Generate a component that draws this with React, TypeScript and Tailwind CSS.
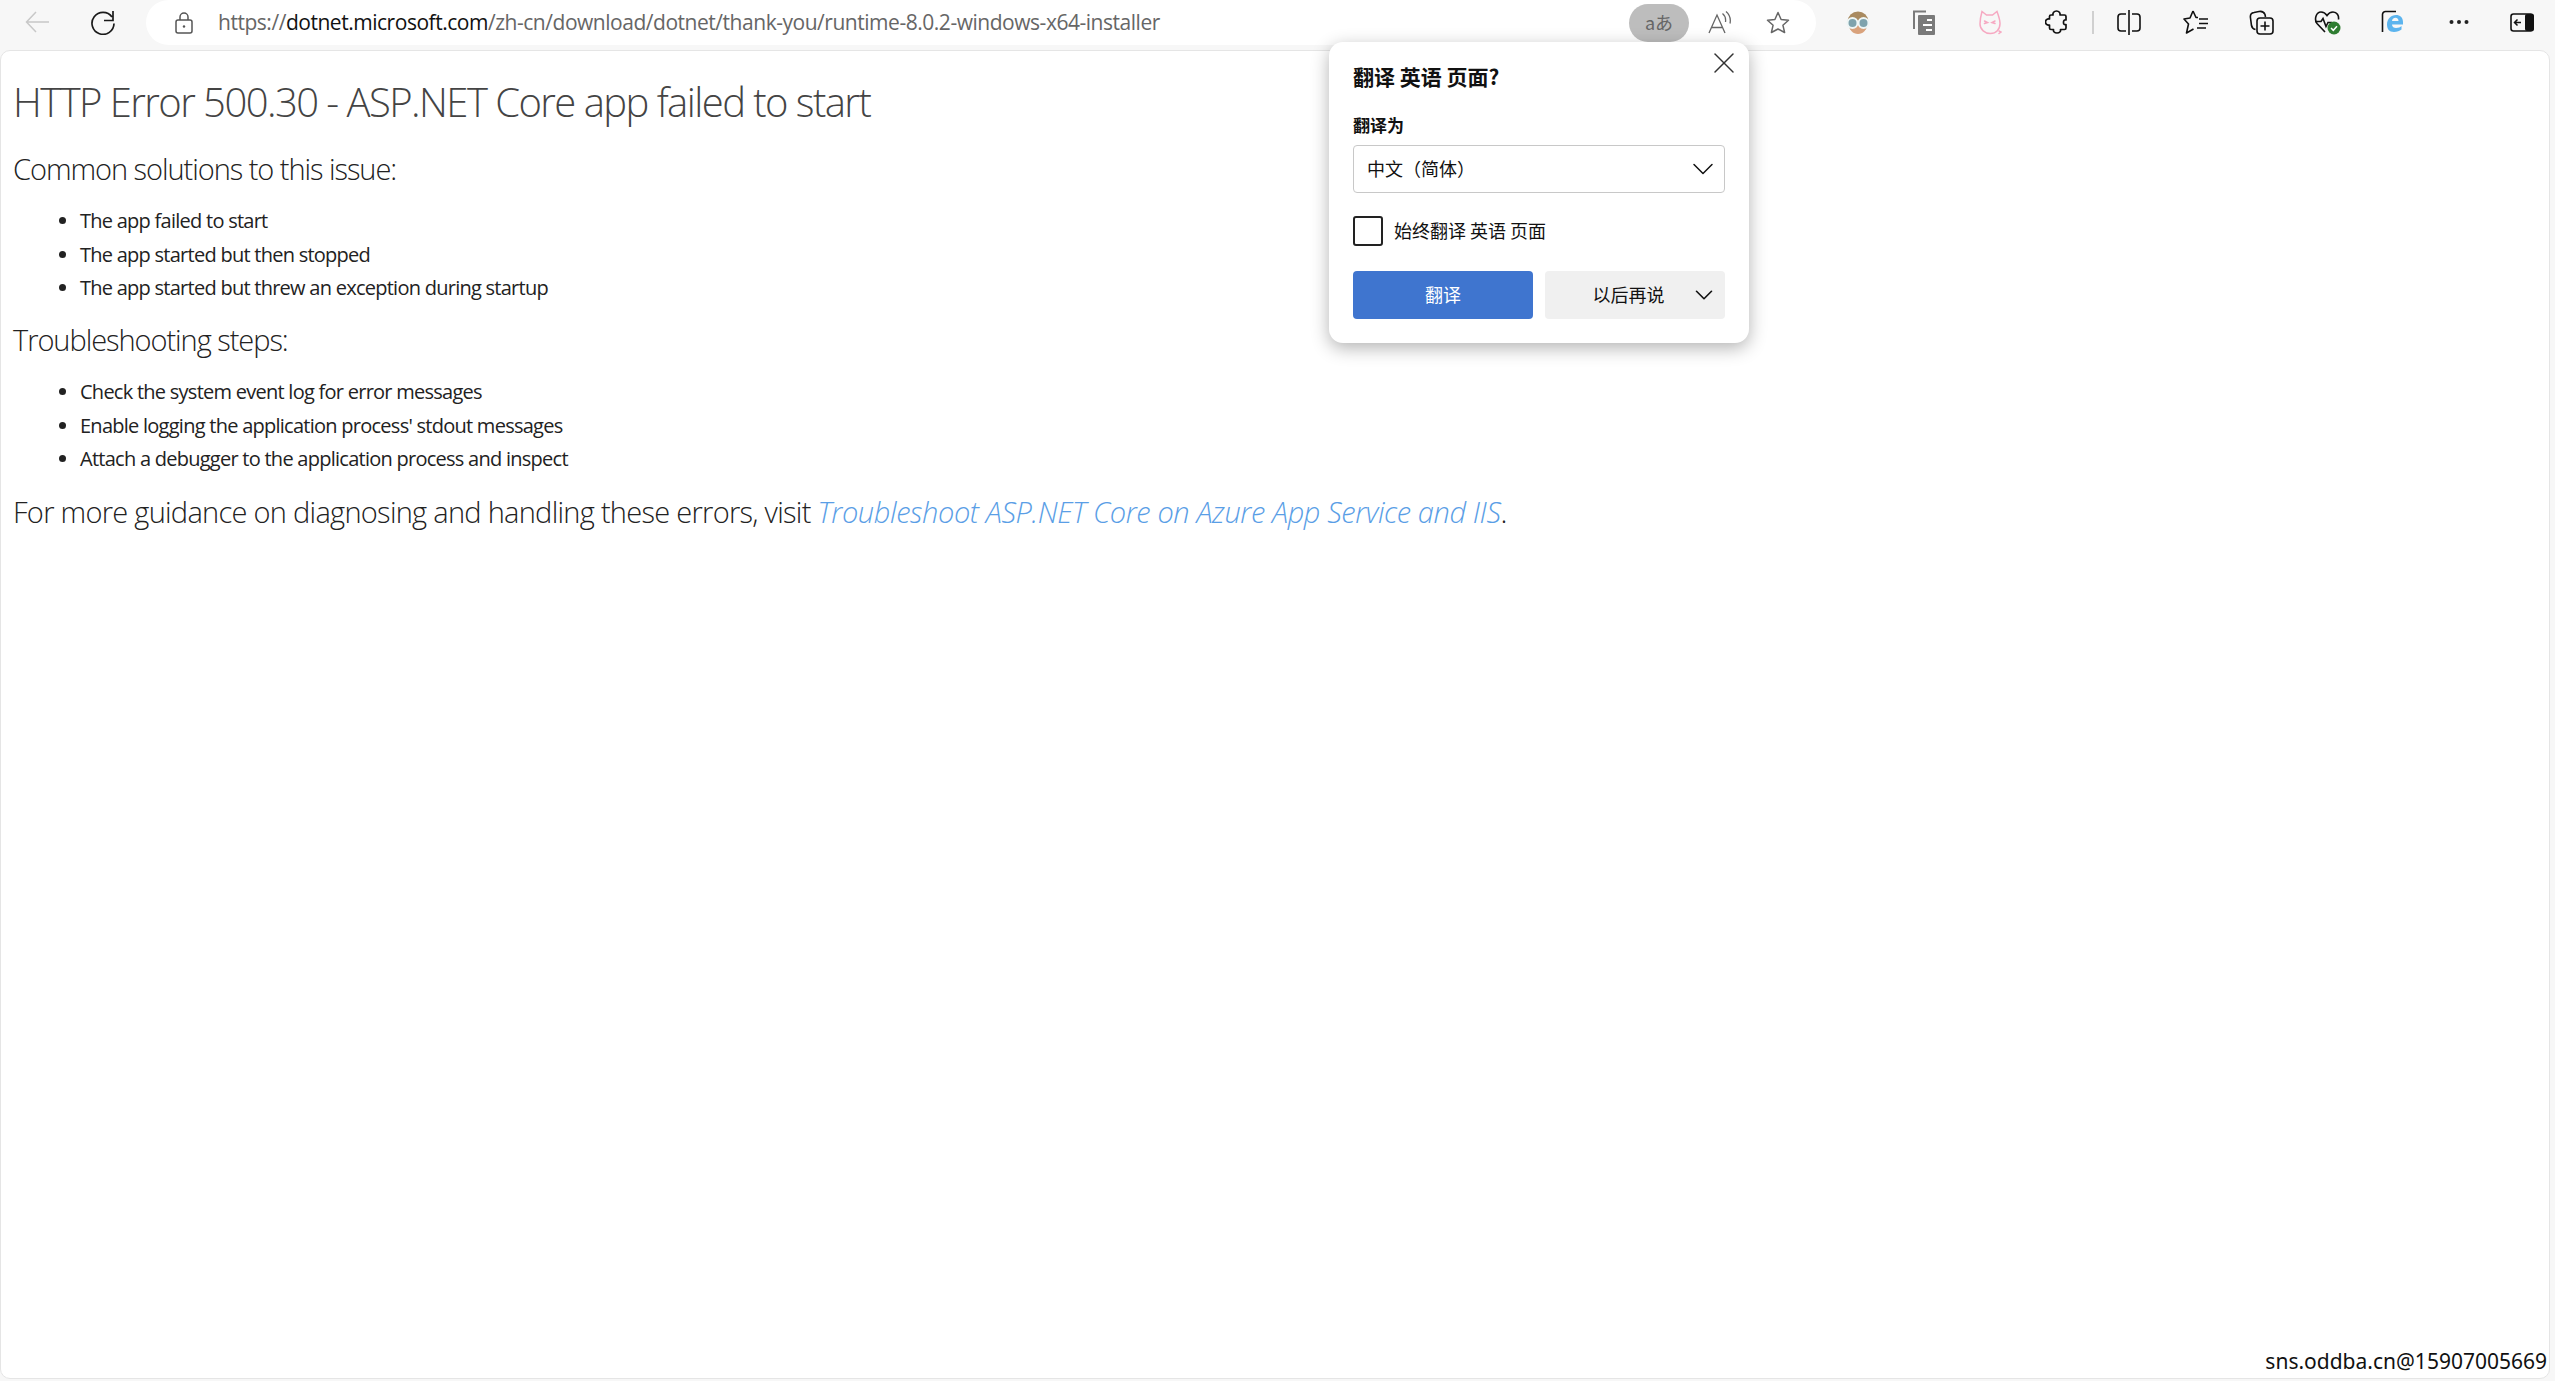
import { X, ChevronDown } from 'lucide-react'

const SANS = "font-['Open_Sans','Noto_Sans_CJK_SC',sans-serif]"
const CJK = "font-['Noto_Sans_CJK_SC','Noto_Sans',sans-serif]"

const COMMON = ['The app failed to start', 'The app started but then stopped', 'The app started but threw an exception during startup']
const STEPS = ['Check the system event log for error messages', "Enable logging the application process' stdout messages", 'Attach a debugger to the application process and inspect']

function Bullets({ items }: { items: string[] }) {
  return (
    <ul className="mt-[15px] ml-[46px] text-[20px] leading-[33.5px] font-normal tracking-[-0.74px] text-[#222]">
      {items.map(t => (
        <li key={t} className="flex items-center gap-[14px]">
          <span className="h-[7px] w-[7px] rounded-full bg-[#222]" />
          {t}
        </li>
      ))}
    </ul>
  )
}

function ToolbarSlot({ children }: { children: React.ReactNode }) {
  return <div className="flex h-[44px] w-[66px] shrink-0 items-center justify-center">{children}</div>
}

export default function App() {
  return (
    <div className={`relative flex h-[1381px] w-[2555px] flex-col overflow-hidden bg-[#f7f7f7] ${SANS}`}>
      {/* toolbar */}
      <header className="flex h-[50px] shrink-0 items-start">
        <div className="flex h-[44px] w-[74px] shrink-0 items-center justify-center">
          <svg width="24" height="22" viewBox="0 0 24 22" fill="none" stroke="#c8c8c8" strokeWidth="1.5"><path d="M24 11H1.500M11 1 1.500 11 11 21" /></svg>
        </div>
        <div className="flex h-[44px] w-[58px] shrink-0 items-center justify-center">
          <svg width="24" height="25" viewBox="0 0 24 25" fill="none" stroke="#1a1a1a" strokeWidth="1.700"><path d="M21 7A11 11 0 1 0 23 13.500M22 1v9.500h-9" /></svg>
        </div>
        <div className="ml-[14px] flex h-[45px] w-[1670px] shrink-0 items-center rounded-[24px] bg-white pr-[9px] pl-[29px]">
          <svg width="18" height="22" viewBox="0 0 18 22" fill="none" stroke="#555" strokeWidth="1.500"><rect x="1" y="8" width="16" height="13" rx="2" /><path d="M5 8V5a4 4 0 0 1 8 0v3" /><circle cx="9" cy="14.500" r="1.200" fill="#555" stroke="none" /></svg>
          <span className="ml-[25px] text-[21px] tracking-[-0.47px] text-[#666]">https://<span className="text-[#111]">dotnet.microsoft.com</span>/zh-cn/download/dotnet/thank-you/runtime-8.0.2-windows-x64-installer</span>
          <div className="ml-auto flex items-center">
            <div className={`flex h-[38px] w-[60px] items-center justify-center rounded-full bg-[#bdbdbd] text-[18px] text-[#666] ${CJK}`}>aあ</div>
            <div className="flex w-[60px] justify-center">
              <svg width="23" height="23" viewBox="0 0 23 23" fill="none" stroke="#666" strokeWidth="1.300"><path d="M1 22 9 4l8 18M3.500 16.500h11M14.500 2.500c2.500 2 3.500 5 3 8.500M18 .5c3.500 3 5 7 4 12" /></svg>
            </div>
            <div className="flex w-[58px] justify-center">
              <svg width="24" height="24" viewBox="0 0 24 24" fill="none" stroke="#666" strokeWidth="1.500" strokeLinejoin="round"><path d="m12 1.500 3.100 7 7.400.7-5.600 5 1.700 7.300L12 18l-6.600 3.500 1.700-7.300-5.600-5 7.400-.7z" /></svg>
            </div>
          </div>
        </div>
        <div className="flex flex-1 items-center pl-[9px]">
          <ToolbarSlot>
            <svg width="24" height="23" viewBox="0 0 24 23"><circle cx="12" cy="11" r="10.500" fill="#a98a60" /><path d="M3 13h18c0 6-4 10-9 10s-9-4-9-10z" fill="#d9a27c" /><circle cx="6.500" cy="12" r="5" fill="#7fa3ad" stroke="#eef6f6" strokeWidth="2" /><circle cx="17.500" cy="12" r="5" fill="#7fa3ad" stroke="#eef6f6" strokeWidth="2" /></svg>
          </ToolbarSlot>
          <ToolbarSlot>
            <svg width="22" height="25" viewBox="0 0 22 25" fill="none"><path d="M1 19V1.500h12" stroke="#7a7a7a" strokeWidth="2" /><rect x="5" y="5" width="17" height="20" rx="1" fill="#7a7a7a" /><path d="M14 10h5M10 15h9M13 20h6" stroke="#fff" strokeWidth="2" /></svg>
          </ToolbarSlot>
          <ToolbarSlot>
            <svg width="23" height="25" viewBox="0 0 23 25" fill="none" stroke="#f6a9c2" strokeWidth="1.500" strokeLinecap="round"><path d="M3 1.500 7.500 5h6L18 1.500c1.500 4 3 8 3 12 0 6-4 10-9.500 10S1 19.500 1 14C1 10 2 5 3 1.500z" /><path d="m5.500 11 3 1.500-3 1M16 11l-3 1.500 3 1M20 21l2 1-2 1.500" /></svg>
          </ToolbarSlot>
          <ToolbarSlot>
            <svg width="23" height="25" viewBox="0 0 23 25" fill="none" stroke="#111" strokeWidth="1.700" strokeLinejoin="round"><path d="M8 5c-.5-2 1-4 3.500-4S15.500 3 15 5h4.500A1.500 1.500 0 0 1 21 6.500V10c-2-.5-2.500 1-2.500 2.500S19 15 21 14.500V18a1.500 1.500 0 0 1-1.500 1.500h-4c.5 2-1 3.500-3.500 3.500s-4-1.500-3.500-3.500H6A1.500 1.500 0 0 1 4.500 18v-3c-2.500.5-4-1-4-3s1.500-3.500 4-3V6.500A1.500 1.500 0 0 1 6 5z" /></svg>
          </ToolbarSlot>
          <div className="ml-[3px] h-[23px] w-[2px] shrink-0 bg-[#d0d0d0]" />
          <div className="w-[2px] shrink-0" />
          <ToolbarSlot>
            <svg width="24" height="25" viewBox="0 0 24 25" fill="none" stroke="#111" strokeWidth="1.600"><path d="M9 4H4a3 3 0 0 0-3 3v11a3 3 0 0 0 3 3h5M15 4h5a3 3 0 0 1 3 3v11a3 3 0 0 1-3 3h-5M12 0v25" /></svg>
          </ToolbarSlot>
          <ToolbarSlot>
            <svg width="25" height="24" viewBox="0 0 25 24" fill="none" stroke="#111" strokeWidth="1.600" strokeLinejoin="round"><path d="M10 1 13 7.500h2M10 1 7 8 1 9l4.500 5-2 9 7-4" /><path d="M16 9h9M16 13.500h9M14 18h9" /></svg>
          </ToolbarSlot>
          <ToolbarSlot>
            <svg width="25" height="25" viewBox="0 0 25 25" fill="none" stroke="#111" strokeWidth="1.600"><path d="M6.500 19.500C4 19 3 18 2.500 15.500L1.500 8C1 5 2 3 5 2.500L10 1.500c3-.5 5 .5 6 3l.5 2.500" /><rect x="8" y="8" width="16" height="16" rx="3" /><path d="M16 11.500v9M11.500 16h9" /></svg>
          </ToolbarSlot>
          <ToolbarSlot>
            <svg width="27" height="25" viewBox="0 0 27 25" fill="none" stroke="#111" strokeWidth="1.600"><path d="M11 22 3 13.500C0 9.500 2 2 7 2c3 0 5 2 6 3.500C14 4 16 2 19 2c4 0 6 3.500 5.500 7.500" /><path d="M1 11.500h6l2-3 3 8 2-4h4" /><circle cx="20" cy="18" r="6.500" fill="#2f7d31" stroke="none" /><path d="m17 18 2.300 2.300 3.700-4" stroke="#fff" strokeWidth="1.500" /></svg>
          </ToolbarSlot>
          <ToolbarSlot>
            <svg width="24" height="24" viewBox="0 0 24 24" fill="none"><path d="M1.500 22V4.500a3 3 0 0 1 3-3H15" stroke="#111" strokeWidth="1.600" /><path d="M13 22c-5 0-7-3-7-7.500C6 9 10 5 15 5c4 0 7 2.500 7 7v2.500H11c0 2.500 2 3.500 4 3.500 2.500 0 4.500-1 5.500-2v3.500c-2 1.500-4.500 2.500-7.500 2.500zm-2-11h6.500c0-2-1-3.300-3-3.300s-3.500 1.300-3.500 3.300z" fill="#5cb4ee" /></svg>
          </ToolbarSlot>
          <ToolbarSlot>
            <svg width="20" height="6" viewBox="0 0 20 6" fill="#222"><circle cx="2.500" cy="3" r="2" /><circle cx="10" cy="3" r="2" /><circle cx="17.500" cy="3" r="2" /></svg>
          </ToolbarSlot>
          <div className="flex h-[44px] w-[60px] shrink-0 items-center justify-center">
            <svg width="24" height="19" viewBox="0 0 24 19" fill="none"><rect x="1" y="1" width="22" height="17" rx="2.500" stroke="#111" strokeWidth="1.600" /><rect x="15" y="1" width="9" height="17" rx="2" fill="#111" /><path d="M11 9.500H4.500m3-3-3 3 3 3" stroke="#111" strokeWidth="1.500" /></svg>
          </div>
        </div>
      </header>

      {/* page content */}
      <main className="mr-[5px] mb-[2px] flex-1 rounded-[10px] border border-[#e5e5e5] bg-white pr-4 pl-[12px] text-[#222]">
        <h1 className="mt-[26px] text-[40px] leading-[50px] font-light tracking-[-1.55px] text-[#444]">HTTP Error 500.30 - ASP.NET Core app failed to start</h1>
        <h2 className="mt-[22px] text-[29px] leading-[40px] font-light tracking-[-1.05px]">Common solutions to this issue:</h2>
        <Bullets items={COMMON} />
        <h2 className="mt-[15.500px] text-[29px] leading-[40px] font-light tracking-[-1.05px]">Troubleshooting steps:</h2>
        <Bullets items={STEPS} />
        <p className="mt-[16.500px] text-[29px] leading-[40px] font-light tracking-[-0.72px]">For more guidance on diagnosing and handling these errors, visit <a className="tracking-[-0.4px] text-[#5a9ee6] italic">Troubleshoot ASP.NET Core on Azure App Service and IIS</a>.</p>
      </main>

      {/* translate popup */}
      <div className={`absolute top-[42px] left-[1329px] flex h-[301px] w-[420px] flex-col rounded-[14px] bg-white px-[24px] shadow-[0_5px_18px_rgba(0,0,0,0.3)] ${CJK}`}>
        <X className="absolute top-[3px] right-[7px] text-[#333]" size={36} strokeWidth={1} />
        <div className="mt-[19px] text-[21px] leading-[30px] font-bold text-[#111]">翻译 英语 页面?</div>
        <div className="mt-[21px] text-[17px] leading-[25px] font-bold text-[#111]">翻译为</div>
        <div className="mt-[8px] flex h-[48px] w-[372px] items-center justify-between rounded-[4px] border border-[#c8c8c8] pr-[3px] pl-[13px] text-[18px] text-[#111]">
          <span className="pb-[2px]">中文（简体）</span>
          <ChevronDown size={36} strokeWidth={1} />
        </div>
        <div className="mt-[23px] flex h-[30px] items-center gap-[11px] text-[18px] text-[#111]">
          <div className="h-[30px] w-[30px] rounded-[3px] border-2 border-[#222]" />
          <span className="pb-[1px]">始终翻译 英语 页面</span>
        </div>
        <div className="mt-[25px] flex gap-[12px] text-[18px]">
          <div className="flex h-[48px] w-[180px] items-center justify-center rounded-[4px] bg-[#3f75cf] pb-[1px] text-white">翻译</div>
          <div className="relative flex h-[48px] w-[180px] items-center justify-center rounded-[4px] bg-[#f0f0f0] pr-[13px] pb-[1px] text-[#111]">
            以后再说
            <ChevronDown className="absolute right-[6px]" size={30} strokeWidth={1.300} />
          </div>
        </div>
      </div>

      {/* watermark */}
      <div className="absolute right-[8px] bottom-[5px] font-['Noto_Sans',sans-serif] text-[21px] leading-[30px] text-[#111]">sns.oddba.cn@15907005669</div>
    </div>
  )
}
